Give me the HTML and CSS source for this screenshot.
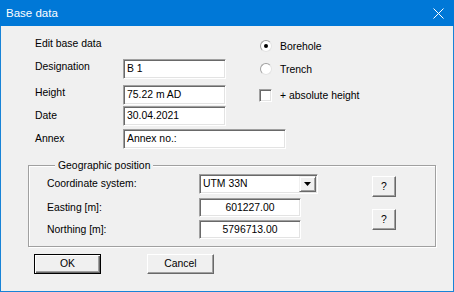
FILE: index.html
```html
<!DOCTYPE html>
<html lang="en">

<head>
    <meta charset="UTF-8">
    <title>Base data</title>
    <link rel="stylesheet" href="styles.css">
</head>

<body>
<div class="dialog">
    <div class="titlebar">
        <span class="title">Base data</span>
        <svg class="close" width="11" height="11" viewBox="0 0 11 11">
            <path d="M0.5 0.5 L10.5 10.5 M10.5 0.5 L0.5 10.5" stroke="#fff" stroke-width="1" fill="none"/>
        </svg>
    </div>
    <div class="content">
        <div class="top">
            <div class="heading">Edit base data</div>
            <div class="options">
                <div class="opt first"><span class="radio checked"></span>Borehole</div>
                <div class="opt"><span class="radio"></span>Trench</div>
                <div class="opt check"><span class="checkbox"></span>+ absolute height</div>
            </div>

            <div class="lbl">Designation</div>
            <div class="edit">B 1</div>

            <div class="lbl">Height</div>
            <div class="edit">75.22 m AD</div>

            <div class="lbl mid">Date</div>
            <div class="edit">30.04.2021</div>

            <div class="lbl mid">Annex</div>
            <div class="edit annex">Annex no.:</div>
        </div>

        <fieldset class="group">
            <legend>Geographic position</legend>
            <div class="geo">
                <div class="lbl">Coordinate system:</div>
                <div class="combo">
                    <span class="combo-text">UTM 33N</span>
                    <span class="drop">
                        <svg width="7" height="4" viewBox="0 0 7 4"><path d="M0 0 H7 L3.5 4 Z" fill="#000"/></svg>
                    </span>
                </div>
                <div class="btn small q1">?</div>

                <div class="lbl">Easting [m]:</div>
                <div class="edit num">601227.00</div>
                <div class="btn small q2">?</div>

                <div class="lbl">Northing [m]:</div>
                <div class="edit num">5796713.00</div>
            </div>
        </fieldset>

        <div class="buttons">
            <div class="btn default">OK</div>
            <div class="btn">Cancel</div>
        </div>
    </div>
</div>
</body>

</html>
```

FILE: styles.css
```css
html,
body {
    margin: 0;
    padding: 0;
    background: #f0f0f0;
}

.dialog {
    width: 454px;
    height: 292px;
    box-sizing: border-box;
    border: 1px solid #1883d7;
    border-top: 0;
    background: #f0f0f0;
    font-family: "Liberation Sans", Arial, sans-serif;
    font-size: 10.4px;
    color: #000;
}

.titlebar {
    height: 26px;
    margin: 0 -1px;
    background: #0078d7;
    display: flex;
    align-items: center;
    justify-content: space-between;
    padding: 0 10px 0 6px;
}

.title {
    color: #fff;
    font-family: "Liberation Sans", Arial, sans-serif;
    font-size: 11.5px;
}

.close {
    display: block;
}

/* upper part */
.top {
    display: grid;
    grid-template-columns: 88px 137px 160px;
    grid-template-rows: 22px 26px 21px 23px 20px;
    margin: 11px 0 0 34px;
}

.heading {
    line-height: 14px;
    grid-column: 1 / 3;
}

.lbl {
    line-height: 16px;
    white-space: nowrap;
}

.lbl.mid {
    line-height: 20px;
}

.edit {
    height: 20px;
    width: 103px;
    box-sizing: border-box;
    background: #fff;
    border-top: 1px solid #a0a0a0;
    border-left: 1px solid #a0a0a0;
    border-bottom: 1px solid #fff;
    border-right: 1px solid #fff;
    box-shadow: inset 1px 1px 0 #696969, inset -1px -1px 0 #e3e3e3;
    padding-left: 3px;
    line-height: 18px;
    white-space: nowrap;
}

.edit.annex {
    width: 163px;
    grid-column: 2 / 4;
}

.options {
    grid-column: 3;
    grid-row: 1 / 5;
    display: flex;
    flex-direction: column;
}

.opt {
    display: flex;
    align-items: center;
    height: 18px;
    margin-top: 5px;
}

.opt.first {
    margin-top: 0;
}

.opt.check {
    margin-top: 8px;
}

.radio {
    width: 12px;
    height: 12px;
    box-sizing: border-box;
    border-radius: 50%;
    border: 1px solid;
    border-color: #a0a0a0 #e3e3e3 #e3e3e3 #a0a0a0;
    background: #fff;
    margin-right: 8px;
    position: relative;
}

.radio.checked::after {
    content: "";
    position: absolute;
    left: 3px;
    top: 3px;
    width: 4px;
    height: 4px;
    border-radius: 50%;
    background: #000;
}

.checkbox {
    width: 13px;
    height: 13px;
    box-sizing: border-box;
    background: #fff;
    border-top: 1px solid #a0a0a0;
    border-left: 1px solid #a0a0a0;
    border-bottom: 1px solid #fff;
    border-right: 1px solid #fff;
    box-shadow: inset 1px 1px 0 #696969, inset -1px -1px 0 #e3e3e3;
    margin-right: 8px;
    margin-left: -1px;
}

/* group box */
.group {
    width: 408px;
    box-sizing: border-box;
    margin: 10px 0 0 27px;
    padding: 2px 0 6px 18px;
    border: 1px solid #a0a0a0;
    box-shadow: inset 1px 1px 0 #fff, 1px 1px 0 #fff;
    min-width: 0;
}

.group legend {
    padding: 0 3px;
    margin-left: 8px;
    line-height: 13px;
    background: #f0f0f0;
}

.geo {
    display: grid;
    grid-template-columns: 152px 173px 24px;
    grid-template-rows: 24px 22px 20px;
}

.geo .lbl {
    line-height: 20px;
}

.combo {
    width: 119px;
    height: 20px;
    box-sizing: border-box;
    background: #fff;
    border-top: 1px solid #a0a0a0;
    border-left: 1px solid #a0a0a0;
    border-bottom: 1px solid #fff;
    border-right: 1px solid #fff;
    box-shadow: inset 1px 1px 0 #696969, inset -1px -1px 0 #e3e3e3;
    display: flex;
    align-items: stretch;
    padding: 1px 1px 1px 1px;
}

.combo-text {
    flex: 1;
    padding-left: 2px;
    line-height: 16px;
}

.drop {
    width: 17px;
    box-sizing: border-box;
    background: #f0f0f0;
    border-top: 1px solid #f0f0f0;
    border-left: 1px solid #f0f0f0;
    border-right: 1px solid #696969;
    border-bottom: 1px solid #696969;
    box-shadow: inset 1px 1px 0 #fff, inset -1px -1px 0 #a0a0a0;
    display: flex;
    align-items: center;
    justify-content: center;
}

.drop svg {
    display: block;
}

.edit.num {
    width: 102px;
    height: 19px;
    text-align: center;
    line-height: 17px;
    padding-left: 0;
}

/* buttons */
.btn {
    box-sizing: border-box;
    height: 20px;
    width: 67px;
    background: #f0f0f0;
    border-top: 1px solid #fff;
    border-left: 1px solid #fff;
    border-right: 1px solid #696969;
    border-bottom: 1px solid #696969;
    box-shadow: inset -1px -1px 0 #a0a0a0;
    text-align: center;
    line-height: 18px;
}

.btn.default {
    border: 1px solid #000;
    box-shadow: inset 1px 1px 0 #fff, inset -1px -1px 0 #696969, inset -2px -2px 0 #a0a0a0;
}

.btn.small {
    width: 24px;
    height: 21px;
    line-height: 19px;
}

.q1 {
    margin-top: 2px;
}

.q2 {
    grid-row: 2 / 4;
    grid-column: 3;
    align-self: center;
}

.buttons {
    display: flex;
    gap: 46px;
    margin: 7px 0 0 33px;
}
```
